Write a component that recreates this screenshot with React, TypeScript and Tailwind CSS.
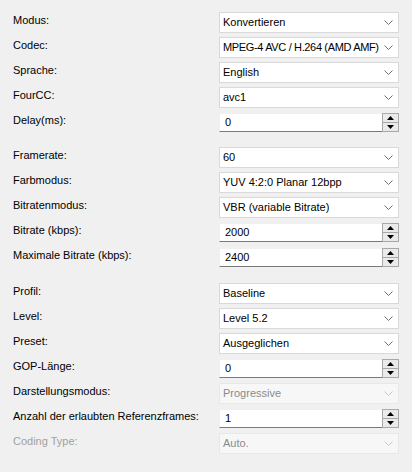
import React from 'react'

type Row =
  | { kind: 'combo'; label: string; value: string; disabled?: boolean; tight?: boolean }
  | { kind: 'spin'; label: string; value: string }

const groups: Row[][] = [
  [
    { kind: 'combo', label: 'Modus:', value: 'Konvertieren' },
    { kind: 'combo', label: 'Codec:', value: 'MPEG-4 AVC / H.264 (AMD AMF)', tight: true },
    { kind: 'combo', label: 'Sprache:', value: 'English' },
    { kind: 'combo', label: 'FourCC:', value: 'avc1' },
    { kind: 'spin', label: 'Delay(ms):', value: '0' },
  ],
  [
    { kind: 'combo', label: 'Framerate:', value: '60' },
    { kind: 'combo', label: 'Farbmodus:', value: 'YUV 4:2:0 Planar 12bpp' },
    { kind: 'combo', label: 'Bitratenmodus:', value: 'VBR (variable Bitrate)' },
    { kind: 'spin', label: 'Bitrate (kbps):', value: '2000' },
    { kind: 'spin', label: 'Maximale Bitrate (kbps):', value: '2400' },
  ],
  [
    { kind: 'combo', label: 'Profil:', value: 'Baseline' },
    { kind: 'combo', label: 'Level:', value: 'Level 5.2' },
    { kind: 'combo', label: 'Preset:', value: 'Ausgeglichen' },
    { kind: 'spin', label: 'GOP-Länge:', value: '0' },
    { kind: 'combo', label: 'Darstellungsmodus:', value: 'Progressive', disabled: true },
    { kind: 'spin', label: 'Anzahl der erlaubten Referenzframes:', value: '1' },
    { kind: 'combo', label: 'Coding Type:', value: 'Auto.', disabled: true },
  ],
]

function Chevron({ disabled }: { disabled?: boolean }) {
  return (
    <svg width="9" height="6" viewBox="0 0 9 6" className="shrink-0">
      <polyline
        points="0.5,0.5 4.5,4.5 8.5,0.5"
        fill="none"
        stroke={disabled ? '#c8c8c8' : '#707070'}
        strokeWidth="1"
      />
    </svg>
  )
}

function Combo({ value, disabled, tight }: { value: string; disabled?: boolean; tight?: boolean }) {
  return (
    <div
      className={`flex h-[21px] w-[180px] items-center justify-between border pl-[3px] pr-[5px] ${
        disabled ? 'border-[#e8e8e8] bg-[#f7f7f7] text-[#8a8a8a]' : 'border-[#d9d9d9] bg-white text-black'
      }`}
    >
      <span className={`min-w-0 overflow-hidden whitespace-nowrap ${tight ? 'tracking-[-0.35px]' : ''}`}>{value}</span>
      <Chevron disabled={disabled} />
    </div>
  )
}

function Spin({ value }: { value: string }) {
  return (
    <div className="mt-[1px] flex h-[19px] w-[180px] bg-white">
      <div className="flex flex-1 items-center border-b border-l border-t border-b-[#7a7a7a] border-l-[#f0f0f0] border-t-[#f0f0f0] pl-[5px]">
        {value}
      </div>
      <div className="flex w-[17px] flex-col gap-[1px] border border-[#a8a8a8] bg-[#a8a8a8]">
        <div className="flex flex-1 items-center justify-center bg-[#eaeaea]">
          <svg width="7" height="4" viewBox="0 0 7 4">
            <polygon points="0,4 3.5,0 7,4" fill="#000" />
          </svg>
        </div>
        <div className="flex flex-1 items-center justify-center bg-[#eaeaea]">
          <svg width="7" height="4" viewBox="0 0 7 4">
            <polygon points="0,0 3.5,4 7,0" fill="#000" />
          </svg>
        </div>
      </div>
    </div>
  )
}

export default function App() {
  return (
    <div
      className="h-[472px] w-[412px] bg-[#f0f0f0] pt-[12px] pl-[13px] text-[11px] leading-[15px]"
      style={{ fontFamily: '"Liberation Sans", Arial, sans-serif' }}
    >
      {groups.map((rows, gi) => (
        <div key={gi} className={gi === 1 ? 'mt-[10px]' : gi === 2 ? 'mt-[11px]' : ''}>
          {rows.map((row) => {
            const faded = row.kind === 'combo' && row.disabled && row.label === 'Coding Type:'
            return (
              <div key={row.label} className="flex h-[25px] items-start">
                <div
                  className={`w-[206px] whitespace-nowrap pt-[1px] ${faded ? 'text-[#a0a0a0]' : 'text-black'}`}
                >
                  {row.label}
                </div>
                {row.kind === 'combo' ? (
                  <Combo value={row.value} disabled={row.disabled} tight={row.tight} />
                ) : (
                  <Spin value={row.value} />
                )}
              </div>
            )
          })}
        </div>
      ))}
    </div>
  )
}
